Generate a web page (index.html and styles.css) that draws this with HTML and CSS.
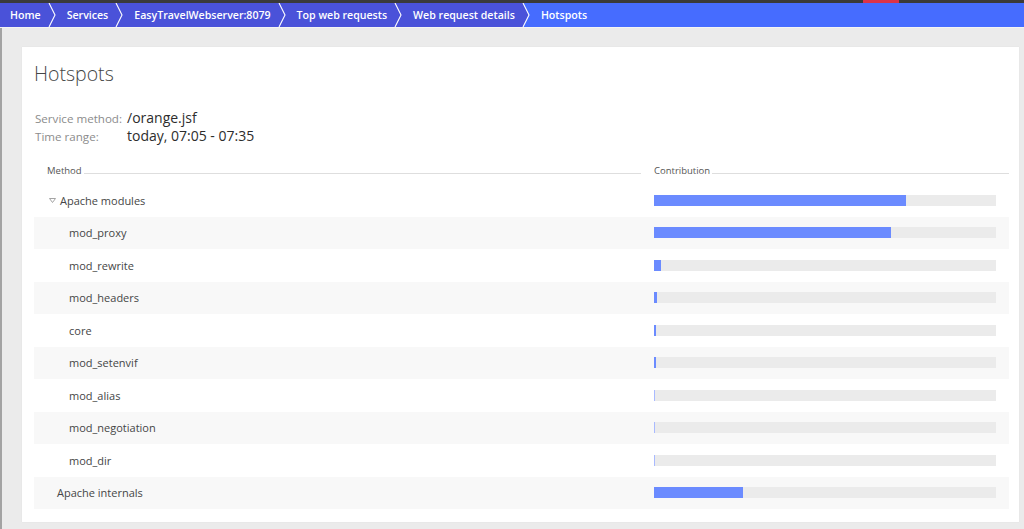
FILE: index.html
```html
<!DOCTYPE html>
<html lang="en">
<head>
<meta charset="utf-8">
<title>Hotspots</title>
<link rel="stylesheet" href="styles.css">
</head>
<body>
<div class="topline"></div>
<nav class="crumbs">
  <a class="crumb">Home</a>
  <svg class="sep" width="12" height="24" viewBox="0 0 12 24"><rect x="0" y="0" width="12" height="24" fill="#4a52d9"/><polyline points="2,0 8,12 2,24" fill="none" stroke="#fff" stroke-width="1.1"/></svg>
  <a class="crumb">Services</a>
  <svg class="sep" width="12" height="24" viewBox="0 0 12 24"><rect x="0" y="0" width="12" height="24" fill="#4a52d9"/><polyline points="2,0 8,12 2,24" fill="none" stroke="#fff" stroke-width="1.1"/></svg>
  <a class="crumb">EasyTravelWebserver:8079</a>
  <svg class="sep" width="12" height="24" viewBox="0 0 12 24"><rect x="0" y="0" width="12" height="24" fill="#4a52d9"/><polyline points="2,0 8,12 2,24" fill="none" stroke="#fff" stroke-width="1.1"/></svg>
  <a class="crumb">Top web requests</a>
  <svg class="sep" width="12" height="24" viewBox="0 0 12 24"><rect x="0" y="0" width="12" height="24" fill="#4a52d9"/><polyline points="2,0 8,12 2,24" fill="none" stroke="#fff" stroke-width="1.1"/></svg>
  <a class="crumb">Web request details</a>
  <svg class="sep" width="12" height="24" viewBox="0 0 12 24"><rect x="0" y="0" width="12" height="24" fill="#466cff"/><polygon points="0,0 2,0 8,12 2,24 0,24" fill="#4a52d9"/><polyline points="2,0 8,12 2,24" fill="none" stroke="#fff" stroke-width="1.1"/></svg>
  <a class="crumb current">Hotspots</a>
</nav>
<main class="main">
  <section class="card">
    <h1 class="title">Hotspots</h1>
    <div class="meta">
      <div class="meta-row"><span class="meta-label">Service method:</span><span class="meta-value">/orange.jsf</span></div>
      <div class="meta-row"><span class="meta-label">Time range:</span><span class="meta-value">today, 07:05 - 07:35</span></div>
    </div>
    <div class="table">
      <div class="thead">
        <div class="th th-method"><span>Method</span><i class="rule"></i></div>
        <div class="th th-contrib"><span>Contribution</span><i class="rule"></i></div>
      </div>
      <div class="row">
        <div class="cell group"><svg class="tri" width="7" height="5" viewBox="0 0 7 5"><polygon points="0.5,0.5 6.5,0.5 3.5,4.5" fill="none" stroke="#9a9a9a" stroke-width="0.9"/></svg>Apache modules</div>
        <div class="cell"><div class="bar"><div class="fill" style="width:73.7%"></div></div></div>
      </div>
      <div class="row">
        <div class="cell child">mod_proxy</div>
        <div class="cell"><div class="bar"><div class="fill" style="width:69.4%"></div></div></div>
      </div>
      <div class="row">
        <div class="cell child">mod_rewrite</div>
        <div class="cell"><div class="bar"><div class="fill" style="width:7px"></div></div></div>
      </div>
      <div class="row">
        <div class="cell child">mod_headers</div>
        <div class="cell"><div class="bar"><div class="fill" style="width:3px"></div></div></div>
      </div>
      <div class="row">
        <div class="cell child">core</div>
        <div class="cell"><div class="bar"><div class="fill" style="width:2px"></div></div></div>
      </div>
      <div class="row">
        <div class="cell child">mod_setenvif</div>
        <div class="cell"><div class="bar"><div class="fill" style="width:2px"></div></div></div>
      </div>
      <div class="row">
        <div class="cell child">mod_alias</div>
        <div class="cell"><div class="bar"><div class="fill thin" style="width:1px"></div></div></div>
      </div>
      <div class="row">
        <div class="cell child">mod_negotiation</div>
        <div class="cell"><div class="bar"><div class="fill thin" style="width:1px"></div></div></div>
      </div>
      <div class="row">
        <div class="cell child">mod_dir</div>
        <div class="cell"><div class="bar"><div class="fill thin" style="width:1px"></div></div></div>
      </div>
      <div class="row">
        <div class="cell top">Apache internals</div>
        <div class="cell"><div class="bar"><div class="fill" style="width:26%"></div></div></div>
      </div>
    </div>
  </section>
</main>
</body>
</html>
```

FILE: styles.css
```css
* { box-sizing: border-box; }

html, body {
  margin: 0;
  padding: 0;
  height: 100%;
}

body {
  background: #ebebeb;
  font-family: "Open Sans", "Noto Sans", "Liberation Sans", sans-serif;
  color: #454646;
  overflow: hidden;
}

.topline {
  height: 3px;
  background: linear-gradient(to right, #3a3a3a 0, #3a3a3a 863px, #dc3349 863px, #dc3349 899px, #3a3a3a 899px);
}

.crumbs {
  display: flex;
  align-items: stretch;
  height: 24px;
  background: #466cff;
  border-bottom: 1px solid #f4f4f4;
  box-sizing: content-box;
}

.crumb {
  display: flex;
  align-items: center;
  padding: 0 6px 0 8px;
  background: #4a52d9;
  color: #ffffff;
  font-size: 10.6px;
  font-weight: 600;
  white-space: nowrap;
}

.crumb:first-child {
  padding-left: 10px;
}

.crumb.current {
  background: #466cff;
}

.sep {
  display: block;
  flex: none;
}

.main {
  border-left: 2px solid #a3a3a3;
  padding: 19px 5px 7px 20px;
  height: calc(100% - 28px);
}

.card {
  background: #ffffff;
  height: 475px;
  padding: 14px 10px 0 12px;
  box-shadow: 0 0 1px rgba(0, 0, 0, 0.08);
}

.title {
  margin: 0;
  font-size: 19.5px;
  line-height: 26px;
  font-weight: 300;
  color: #454646;
}

.meta {
  margin-top: 22px;
  margin-left: 1px;
}

.meta-row {
  display: flex;
  align-items: baseline;
  height: 18px;
  line-height: 18px;
}

.meta-label {
  flex: none;
  width: 92px;
  font-size: 11.6px;
  color: #8c8c8c;
  white-space: nowrap;
}

.meta-value {
  font-size: 14px;
  color: #2d2d2d;
}

.table {
  margin-top: 17px;
}

.thead {
  display: grid;
  grid-template-columns: 607px 1fr;
  column-gap: 13px;
  height: 22px;
}

.th {
  display: flex;
  align-items: baseline;
  font-size: 9.5px;
  line-height: 15px;
  color: #555;
  height: 15px;
  padding-top: 1px;
}

.th-method {
  padding-left: 13px;
}

.rule {
  flex: 1;
  height: 1px;
  background: #dedede;
  margin-left: 2px;
  align-self: flex-end;
  margin-bottom: 3px;
}

.row {
  display: grid;
  grid-template-columns: 607px 1fr;
  column-gap: 13px;
  height: 32.5px;
  align-items: center;
}

.row:nth-child(odd) {
  background: #f8f8f8;
}

.cell {
  display: flex;
  align-items: center;
  font-size: 11px;
  color: #454646;
  white-space: nowrap;
}

.cell.group {
  padding-left: 15px;
}

.tri {
  display: block;
  margin-right: 4px;
  margin-top: 1px;
}

.cell.child {
  padding-left: 35px;
}

.cell.top {
  padding-left: 23px;
}

.bar {
  width: 342px;
  height: 11px;
  background: #ebebeb;
}

.fill {
  height: 100%;
  background: #6b8bff;
}

.fill.thin {
  background: #a9baff;
}
```
